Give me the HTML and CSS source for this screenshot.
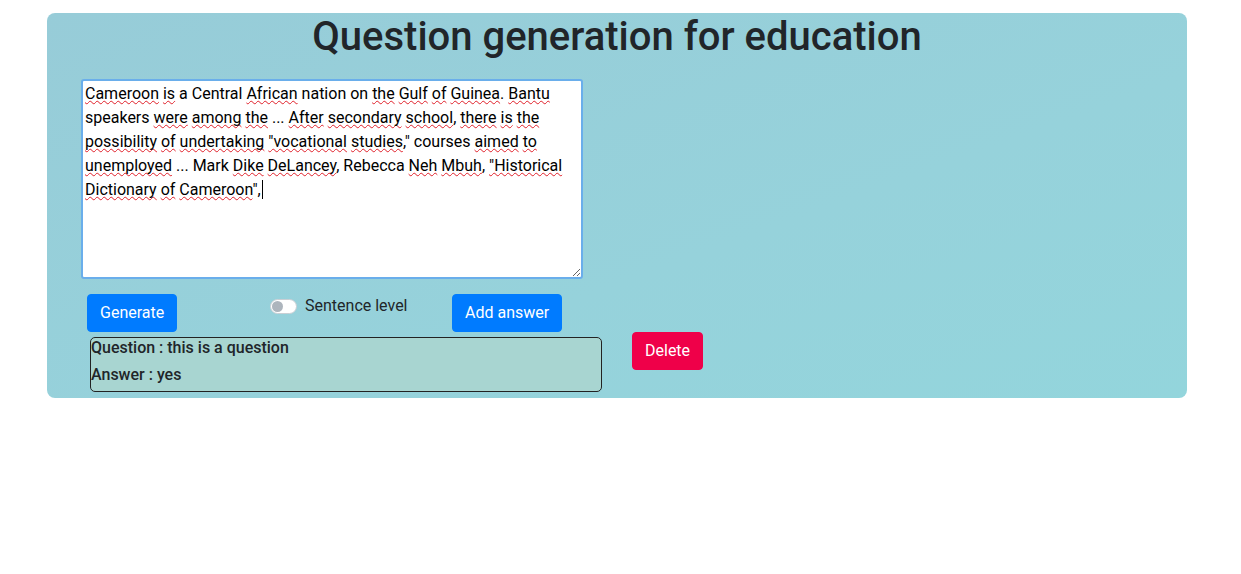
FILE: index.html
```html
<!DOCTYPE html>
<html lang="en">
<head>
<meta charset="utf-8">
<title>Question generation for education</title>
<link rel="stylesheet" href="styles.css">
</head>
<body>
<div class="panel">
  <h1 class="title">Question generation for education</h1>
  <div class="editor"><span class="sp">Cameroon</span> <span class="sp">is</span> a Central <span class="sp">African</span> nation on <span class="sp">the</span> <span class="sp">Gulf</span> <span class="sp">of</span> <span class="sp">Guinea</span>. <span class="sp">Bantu</span> speakers <span class="sp">were</span> <span class="sp">among</span> <span class="sp">the</span> ... <span class="sp">After</span> <span class="sp">secondary</span> <span class="sp">school</span>, <span class="sp">there</span> <span class="sp">is</span> <span class="sp">the</span> <span class="sp">possibility</span> <span class="sp">of</span> <span class="sp">undertaking</span> <span class="sp">"vocational</span> <span class="sp">studies</span>," courses <span class="sp">aimed</span> <span class="sp">to</span> <span class="sp">unemployed</span> ... Mark <span class="sp">Dike</span> <span class="sp">DeLancey</span>, Rebecca <span class="sp">Neh</span> <span class="sp">Mbuh</span>, <span class="sp">"Historical</span> <span class="sp">Dictionary</span> <span class="sp">of</span> <span class="sp">Cameroon</span>",<span class="caret"></span></div>
  <div class="controls">
    <button class="btn btn-primary btn-generate">Generate</button>
    <label class="switch">
      <span class="track"><span class="knob"></span></span>
      <span class="switch-label">Sentence level</span>
    </label>
    <button class="btn btn-primary btn-add">Add answer</button>
  </div>
  <div class="qa-row">
    <div class="qa-card">
      <div class="qa-line">Question : this is a question</div>
      <div class="qa-line qa-last">Answer : yes</div>
    </div>
    <button class="btn btn-danger">Delete</button>
  </div>
</div>
</body>
</html>
```
FILE: styles.css
```css
* { box-sizing: border-box; }
html, body { margin: 0; padding: 0; background: #fff; }
body {
  font-family: Roboto, "Liberation Sans", Arial, sans-serif;
  font-size: 16px;
  color: #212529;
}
.panel {
  margin: 13px 0 0 47px;
  width: 1140px;
  border-radius: 8px;
  background: linear-gradient(160deg, #97ccd8 0%, #96d2db 60%, #93d5dc 100%);
  padding: 0 0 6px 0;
}
.title {
  margin: 0;
  font-size: 40px;
  font-weight: 500;
  line-height: 48px;
  text-align: center;
  color: #212529;
}
.editor {
  margin: 18px 0 0 34px;
  width: 502px;
  height: 200px;
  background: #fff;
  border: 2px solid #6aaeeb;
  border-radius: 3px;
  padding: 1px 2px;
  font-size: 16px;
  line-height: 24px;
  color: #000;
  overflow: auto;
  resize: both;
}
.sp {
  text-decoration: underline wavy #e0202a;
  text-decoration-thickness: 1px;
  text-underline-offset: 1px;
  text-decoration-skip-ink: none;
}
.caret {
  display: inline-block;
  width: 1px;
  height: 19px;
  background: #000;
  vertical-align: -4px;
  margin-left: 1px;
}
.controls {
  display: flex;
  align-items: flex-start;
  margin: 15px 0 0 40px;
}
.btn {
  font-family: inherit;
  font-size: 16px;
  line-height: 24px;
  padding: 6px 12px;
  border: 1px solid transparent;
  border-radius: 4px;
  color: #fff;
  cursor: pointer;
  white-space: nowrap;
}
.btn-primary { background: #007bff; border-color: #007bff; }
.btn-danger { background: #ef0049; border-color: #ef0049; }
.btn-generate { width: 90px; }
.btn-add { width: 110px; }
.switch {
  display: flex;
  align-items: center;
  width: 182px;
  margin-left: 93px;
  line-height: 24px;
  color: #212529;
}
.track {
  position: relative;
  display: inline-block;
  width: 27px;
  height: 15px;
  border-radius: 8px;
  background: #fff;
  border: 1px solid #c9cfd4;
  margin-right: 8px;
}
.knob {
  position: absolute;
  left: 1px;
  top: 1px;
  width: 11px;
  height: 11px;
  border-radius: 50%;
  background: #adb5bd;
}
.qa-row {
  display: flex;
  align-items: flex-start;
  margin: 0 0 0 43px;
}
.qa-card {
  margin-top: 5px;
  width: 512px;
  background: #a8d5d1;
  border: 1px solid #222;
  border-radius: 5px;
  padding: 0;
}
.qa-line {
  font-weight: 500;
  line-height: 19px;
  margin-bottom: 8px;
  color: #212529;
}
.qa-last { margin-bottom: 7px; }
.btn-danger {
  margin-left: 30px;
  width: 71px;
}
```
